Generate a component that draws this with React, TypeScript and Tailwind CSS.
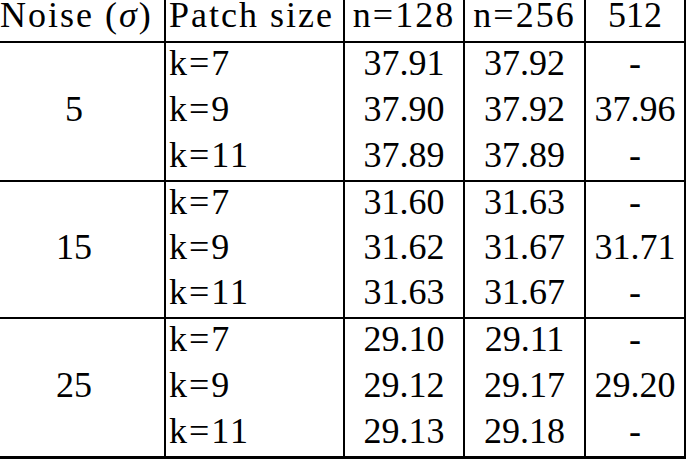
import React from "react";

type Group = {
  noise: string;
  heights: string[];
  rows: string[][];
};

const groups: Group[] = [
  {
    noise: "5",
    heights: ["h-[46px]", "h-[46px]", "h-[45px]"],
    rows: [
      ["k=7", "37.91", "37.92", "-"],
      ["k=9", "37.90", "37.92", "37.96"],
      ["k=11", "37.89", "37.89", "-"],
    ],
  },
  {
    noise: "15",
    heights: ["h-[45px]", "h-[45px]", "h-[45px]"],
    rows: [
      ["k=7", "31.60", "31.63", "-"],
      ["k=9", "31.62", "31.67", "31.71"],
      ["k=11", "31.63", "31.67", "-"],
    ],
  },
  {
    noise: "25",
    heights: ["h-[46px]", "h-[46px]", "h-[45px]"],
    rows: [
      ["k=7", "29.10", "29.11", "-"],
      ["k=9", "29.12", "29.17", "29.20"],
      ["k=11", "29.13", "29.18", "-"],
    ],
  },
];

const cols = "grid grid-cols-[166px_179px_120px_121px_100px]";
const cell = "border-r-2 border-black";

export default function App() {
  return (
    <div className="h-[469px] w-[690px] overflow-hidden bg-white text-[36px] text-black [font-family:Liberation_Serif,serif]">
      <div className="w-[686px]">
        <div className={`${cols} h-[43px] border-b-2 border-black leading-[30px]`}>
          <div className={`${cell} tracking-[2px] whitespace-nowrap`}>
            Noise (<i>σ</i>)
          </div>
          <div className={`${cell} pl-[3px] tracking-[2px] whitespace-nowrap`}>Patch size</div>
          <div className={`${cell} text-center tracking-[2px]`}>n=128</div>
          <div className={`${cell} text-center tracking-[2px]`}>n=256</div>
          <div className={`${cell} text-center`}>512</div>
        </div>

        {groups.map((g, gi) => (
          <div
            key={g.noise}
            className={gi === groups.length - 1 ? "border-b-[3px] border-black" : "border-b-2 border-black"}
          >
            {g.rows.map((r, i) => (
              <div key={r[0]} className={`${cols} ${g.heights[i]} leading-[40px]`}>
                <div className={`${cell} pr-[16px] text-center`}>{i === 1 ? g.noise : ""}</div>
                <div className={`${cell} pl-[3px] tracking-[2px]`}>{r[0]}</div>
                <div className={`${cell} text-center`}>{r[1]}</div>
                <div className={`${cell} text-center`}>{r[2]}</div>
                <div className={`${cell} text-center`}>{r[3]}</div>
              </div>
            ))}
          </div>
        ))}
      </div>
    </div>
  );
}
